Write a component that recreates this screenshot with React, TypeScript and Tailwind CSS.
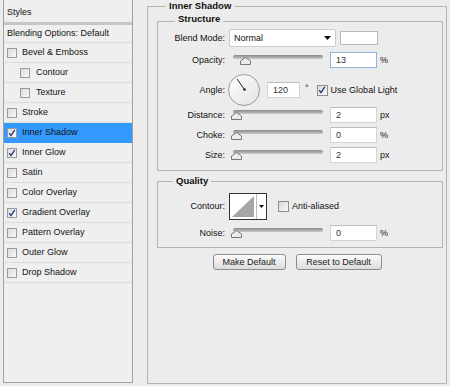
import React from "react";

const styleRows = [
  { name: "Bevel & Emboss" },
  { name: "Contour", sub: true },
  { name: "Texture", sub: true },
  { name: "Stroke" },
  { name: "Inner Shadow", on: true, active: true },
  { name: "Inner Glow", on: true },
  { name: "Satin" },
  { name: "Color Overlay" },
  { name: "Gradient Overlay", on: true },
  { name: "Pattern Overlay" },
  { name: "Outer Glow" },
  { name: "Drop Shadow" },
];

function CheckBox({ on, big }: { on?: boolean; big?: boolean }) {
  return (
    <span
      className={
        big
          ? "flex h-[11px] w-[11px] shrink-0 items-center justify-center border border-[#8e8e8e] bg-linear-to-br from-[#d8d8d8] to-[#fafafa]"
          : "flex h-[10px] w-[10px] shrink-0 items-center justify-center border border-[#9a9a9a] bg-linear-to-br from-[#dadada] to-[#fafafa]"
      }
    >
      {on && (
        <svg width="8" height="8" viewBox="0 0 8 8">
          <path d="M1.2 4.2 L3 6.6 L6.8 0.8" fill="none" stroke="#1f3583" strokeWidth="1.3" />
        </svg>
      )}
    </span>
  );
}

function Slider({ at }: { at: number }) {
  return (
    <div className="relative h-[10px] w-[90px] shrink-0">
      <div className="h-[4px] w-full rounded-full bg-linear-to-b from-[#8a8a8a] to-[#c9c9c9]" />
      <svg
        className="absolute top-[2px]"
        style={{ left: at }}
        width="11"
        height="8"
        viewBox="0 0 11 8"
      >
        <path d="M0.5 7.5 L0.5 4 L5.5 0.5 L10.5 4 L10.5 7.5 Z" fill="#ececec" stroke="#777" />
      </svg>
    </div>
  );
}

function Field({ value, focus, w = "w-[47px]" }: { value: string; focus?: boolean; w?: string }) {
  return (
    <div
      className={`flex h-[16px] ${w} shrink-0 items-center bg-white pl-[5px] text-[#333] ${
        focus ? "border border-[#8fb6e0]" : "border border-[#d4d4d4] border-t-[#bdbdbd]"
      }`}
    >
      {value}
    </div>
  );
}

function Label({ text }: { text: string }) {
  return <div className="w-[68px] shrink-0 pr-[1px] text-right">{text}</div>;
}

function SliderRow({ label, at, value, unit, focus }: { label: string; at: number; value: string; unit: string; focus?: boolean }) {
  return (
    <div className="flex h-[16px] items-center">
      <Label text={label} />
      <div className="ml-[7px]">
        <Slider at={at} />
      </div>
      <div className="ml-[7px]">
        <Field value={value} focus={focus} />
      </div>
      <span className="ml-[3px]">{unit}</span>
    </div>
  );
}

function Button({ text, w }: { text: string; w: string }) {
  return (
    <div
      className={`flex h-[16px] ${w} items-center justify-center rounded-[3px] border border-[#8c8c8c] bg-linear-to-b from-[#fbfbfb] to-[#dcdcdc] text-[#222]`}
    >
      {text}
    </div>
  );
}

export default function App() {
  return (
    <div className="flex h-[386px] w-[450px] bg-[#ececec] font-['Liberation_Sans',Arial,sans-serif] text-[9px] leading-none text-[#111]">
      {/* Styles list */}
      <div className="ml-[3px] flex h-[383px] w-[130px] flex-col border-x border-b border-[#a3a3a3] bg-[#efefef]">
        <div className="flex h-[22px] items-center pl-[3px] pt-[2px]">Styles</div>
        <div className="h-[3px] bg-[#c6c6c6]" />
        <div className="flex h-[18px] items-center border-b border-[#dcdcdc] pl-[3px]">
          Blending Options: Default
        </div>
        {styleRows.map((row) => (
          <div
            key={row.name}
            className={`flex h-[20px] items-center gap-[5px] border-b ${
              row.active ? "border-[#3399ff] bg-[#3399ff]" : "border-[#dcdcdc]"
            } ${row.sub ? "pl-[16px]" : "pl-[3px]"}`}
          >
            <CheckBox on={row.on} />
            <span className={row.sub ? "ml-[1px]" : ""}>{row.name}</span>
          </div>
        ))}
      </div>

      {/* Settings panel */}
      <fieldset className="ml-[14px] h-[384px] w-[300px] border border-[#b4b4b4]">
        <legend className="ml-[18px] px-[3px] text-[9.5px] font-bold leading-[12px]">Inner Shadow</legend>
        <div className="pl-[9px] pr-[3px]">
          <fieldset className="mt-[3px] border border-[#b4b4b4] pb-[7px]">
            <legend className="ml-[17px] px-[3px] text-[9.5px] font-bold leading-[12px]">
              <span className="relative -top-[2px]">Structure</span>
            </legend>
            <div className="mt-[2px] flex h-[18px] items-center">
              <Label text="Blend Mode:" />
              <div className="ml-[3px] flex h-[18px] w-[107px] items-center justify-between rounded-[2px] border border-[#cbcbcb] bg-white pl-[4px] pr-[4px]">
                <span>Normal</span>
                <svg width="7" height="4" viewBox="0 0 7 4">
                  <path d="M0 0 H7 L3.5 4 Z" fill="#111" />
                </svg>
              </div>
              <div className="ml-[4px] h-[14px] w-[38px] border border-[#b9b9b9] bg-white" />
            </div>
            <div className="mt-[5px]">
              <SliderRow label="Opacity:" at={7} value="13" unit="%" focus />
            </div>
            <div className="mt-[6px] flex h-[32px] items-center">
              <Label text="Angle:" />
              <svg className="ml-[2px] shrink-0" width="32" height="32" viewBox="0 0 32 32">
                <defs>
                  <linearGradient id="dial" x1="0" y1="0" x2="1" y2="1">
                    <stop offset="0" stopColor="#ffffff" />
                    <stop offset="1" stopColor="#e2e2e2" />
                  </linearGradient>
                </defs>
                <circle cx="16" cy="16" r="15.5" fill="url(#dial)" stroke="#9c9c9c" />
                <line x1="16.5" y1="15.5" x2="9" y2="5" stroke="#222" strokeWidth="1" />
                <circle cx="16.5" cy="15.5" r="1.3" fill="#222" />
              </svg>
              <div className="ml-[7px]">
                <Field value="120" w="w-[33px]" />
              </div>
              <span className="ml-[5px] -mt-[4px]">°</span>
              <div className="ml-[8px] flex items-center gap-[3px]">
                <CheckBox on big />
                <span>Use Global Light</span>
              </div>
            </div>
            <div className="mt-[1px]">
              <SliderRow label="Distance:" at={-2} value="2" unit="px" />
            </div>
            <div className="mt-[4px]">
              <SliderRow label="Choke:" at={-2} value="0" unit="%" />
            </div>
            <div className="mt-[4px]">
              <SliderRow label="Size:" at={-2} value="2" unit="px" />
            </div>
          </fieldset>

          <fieldset className="mt-[4px] border border-[#b4b4b4] pb-[6px]">
            <legend className="ml-[15px] px-[3px] text-[9.5px] font-bold leading-[12px]">Quality</legend>
            <div className="mt-[6px] flex h-[27px] items-center">
              <Label text="Contour:" />
              <div className="ml-[3px] flex h-[27px] w-[38px] border border-[#333] bg-white">
                <svg width="26" height="25" viewBox="0 0 26 25">
                  <path d="M2 23 L24 2 L24 23 Z" fill="#a6a6a6" />
                </svg>
                <div className="flex flex-1 items-center justify-center border-l border-[#bdbdbd]">
                  <svg width="5" height="3" viewBox="0 0 5 3">
                    <path d="M0 0 H5 L2.5 3 Z" fill="#111" />
                  </svg>
                </div>
              </div>
              <div className="ml-[11px] flex items-center gap-[3px]">
                <CheckBox big />
                <span>Anti-aliased</span>
              </div>
            </div>
            <div className="mt-[5px]">
              <SliderRow label="Noise:" at={-2} value="0" unit="%" />
            </div>
          </fieldset>

          <div className="mt-[6px] flex justify-center gap-[10px] pr-[6px]">
            <Button text="Make Default" w="w-[73px]" />
            <Button text="Reset to Default" w="w-[86px]" />
          </div>
        </div>
      </fieldset>
    </div>
  );
}
